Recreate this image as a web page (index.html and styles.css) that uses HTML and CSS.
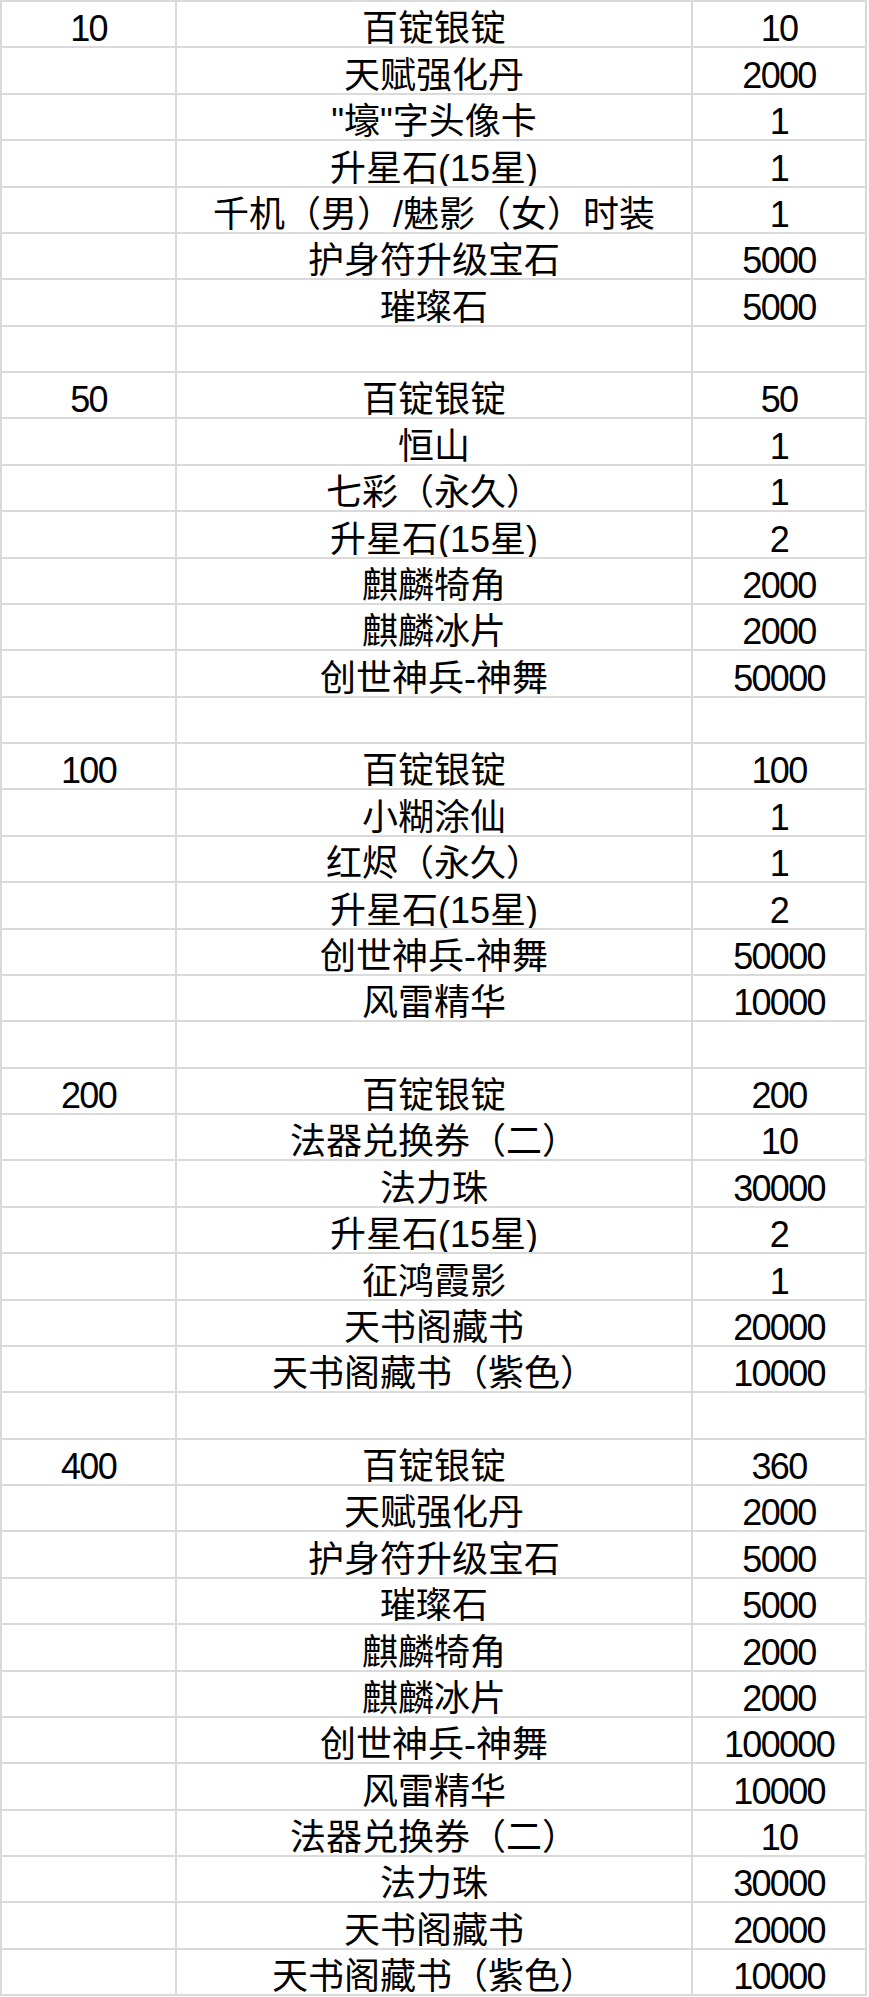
FILE: index.html
```html
<!DOCTYPE html>
<html lang="zh-CN">
<head>
<meta charset="utf-8">
<title>奖励表</title>
<link rel="stylesheet" href="styles.css">
</head>
<body>
<div class="sheet">
  <div class="c num">10</div><div class="c item">百锭银锭</div><div class="c num">10</div>
  <div class="c num"></div><div class="c item">天赋强化丹</div><div class="c num">2000</div>
  <div class="c num"></div><div class="c item">"壕"字头像卡</div><div class="c num">1</div>
  <div class="c num"></div><div class="c item">升星石(15星)</div><div class="c num">1</div>
  <div class="c num"></div><div class="c item">千机（男）/魅影（女）时装</div><div class="c num">1</div>
  <div class="c num"></div><div class="c item">护身符升级宝石</div><div class="c num">5000</div>
  <div class="c num"></div><div class="c item">璀璨石</div><div class="c num">5000</div>
  <div class="c num"></div><div class="c item"></div><div class="c num"></div>

  <div class="c num">50</div><div class="c item">百锭银锭</div><div class="c num">50</div>
  <div class="c num"></div><div class="c item">恒山</div><div class="c num">1</div>
  <div class="c num"></div><div class="c item">七彩（永久）</div><div class="c num">1</div>
  <div class="c num"></div><div class="c item">升星石(15星)</div><div class="c num">2</div>
  <div class="c num"></div><div class="c item">麒麟犄角</div><div class="c num">2000</div>
  <div class="c num"></div><div class="c item">麒麟冰片</div><div class="c num">2000</div>
  <div class="c num"></div><div class="c item">创世神兵-神舞</div><div class="c num">50000</div>
  <div class="c num"></div><div class="c item"></div><div class="c num"></div>

  <div class="c num">100</div><div class="c item">百锭银锭</div><div class="c num">100</div>
  <div class="c num"></div><div class="c item">小糊涂仙</div><div class="c num">1</div>
  <div class="c num"></div><div class="c item">红烬（永久）</div><div class="c num">1</div>
  <div class="c num"></div><div class="c item">升星石(15星)</div><div class="c num">2</div>
  <div class="c num"></div><div class="c item">创世神兵-神舞</div><div class="c num">50000</div>
  <div class="c num"></div><div class="c item">风雷精华</div><div class="c num">10000</div>
  <div class="c num"></div><div class="c item"></div><div class="c num"></div>

  <div class="c num">200</div><div class="c item">百锭银锭</div><div class="c num">200</div>
  <div class="c num"></div><div class="c item">法器兑换券（二）</div><div class="c num">10</div>
  <div class="c num"></div><div class="c item">法力珠</div><div class="c num">30000</div>
  <div class="c num"></div><div class="c item">升星石(15星)</div><div class="c num">2</div>
  <div class="c num"></div><div class="c item">征鸿霞影</div><div class="c num">1</div>
  <div class="c num"></div><div class="c item">天书阁藏书</div><div class="c num">20000</div>
  <div class="c num"></div><div class="c item">天书阁藏书（紫色）</div><div class="c num">10000</div>
  <div class="c num"></div><div class="c item"></div><div class="c num"></div>

  <div class="c num">400</div><div class="c item">百锭银锭</div><div class="c num">360</div>
  <div class="c num"></div><div class="c item">天赋强化丹</div><div class="c num">2000</div>
  <div class="c num"></div><div class="c item">护身符升级宝石</div><div class="c num">5000</div>
  <div class="c num"></div><div class="c item">璀璨石</div><div class="c num">5000</div>
  <div class="c num"></div><div class="c item">麒麟犄角</div><div class="c num">2000</div>
  <div class="c num"></div><div class="c item">麒麟冰片</div><div class="c num">2000</div>
  <div class="c num"></div><div class="c item">创世神兵-神舞</div><div class="c num">100000</div>
  <div class="c num"></div><div class="c item">风雷精华</div><div class="c num">10000</div>
  <div class="c num"></div><div class="c item">法器兑换券（二）</div><div class="c num">10</div>
  <div class="c num"></div><div class="c item">法力珠</div><div class="c num">30000</div>
  <div class="c num"></div><div class="c item">天书阁藏书</div><div class="c num">20000</div>
  <div class="c num"></div><div class="c item">天书阁藏书（紫色）</div><div class="c num">10000</div>
</div>
</body>
</html>
```

FILE: styles.css
```css
html, body {
  margin: 0;
  padding: 0;
  background: #ffffff;
}

.sheet {
  display: grid;
  grid-template-columns: 175px 516px 174px;
  grid-auto-rows: 46.39px;
  width: max-content;
  border-top: 2px solid #dadada;
  border-left: 2px solid #dadada;
  font-family: "Liberation Sans", "Noto Sans CJK SC", sans-serif;
  font-size: 36px;
  line-height: 35px;
  color: #000000;
}

.c {
  box-sizing: border-box;
  border-right: 2px solid #dadada;
  border-bottom: 2px solid #dadada;
  display: flex;
  align-items: flex-end;
  justify-content: center;
  white-space: nowrap;
  overflow: hidden;
}

.num {
  letter-spacing: -1.7px;
}
```
